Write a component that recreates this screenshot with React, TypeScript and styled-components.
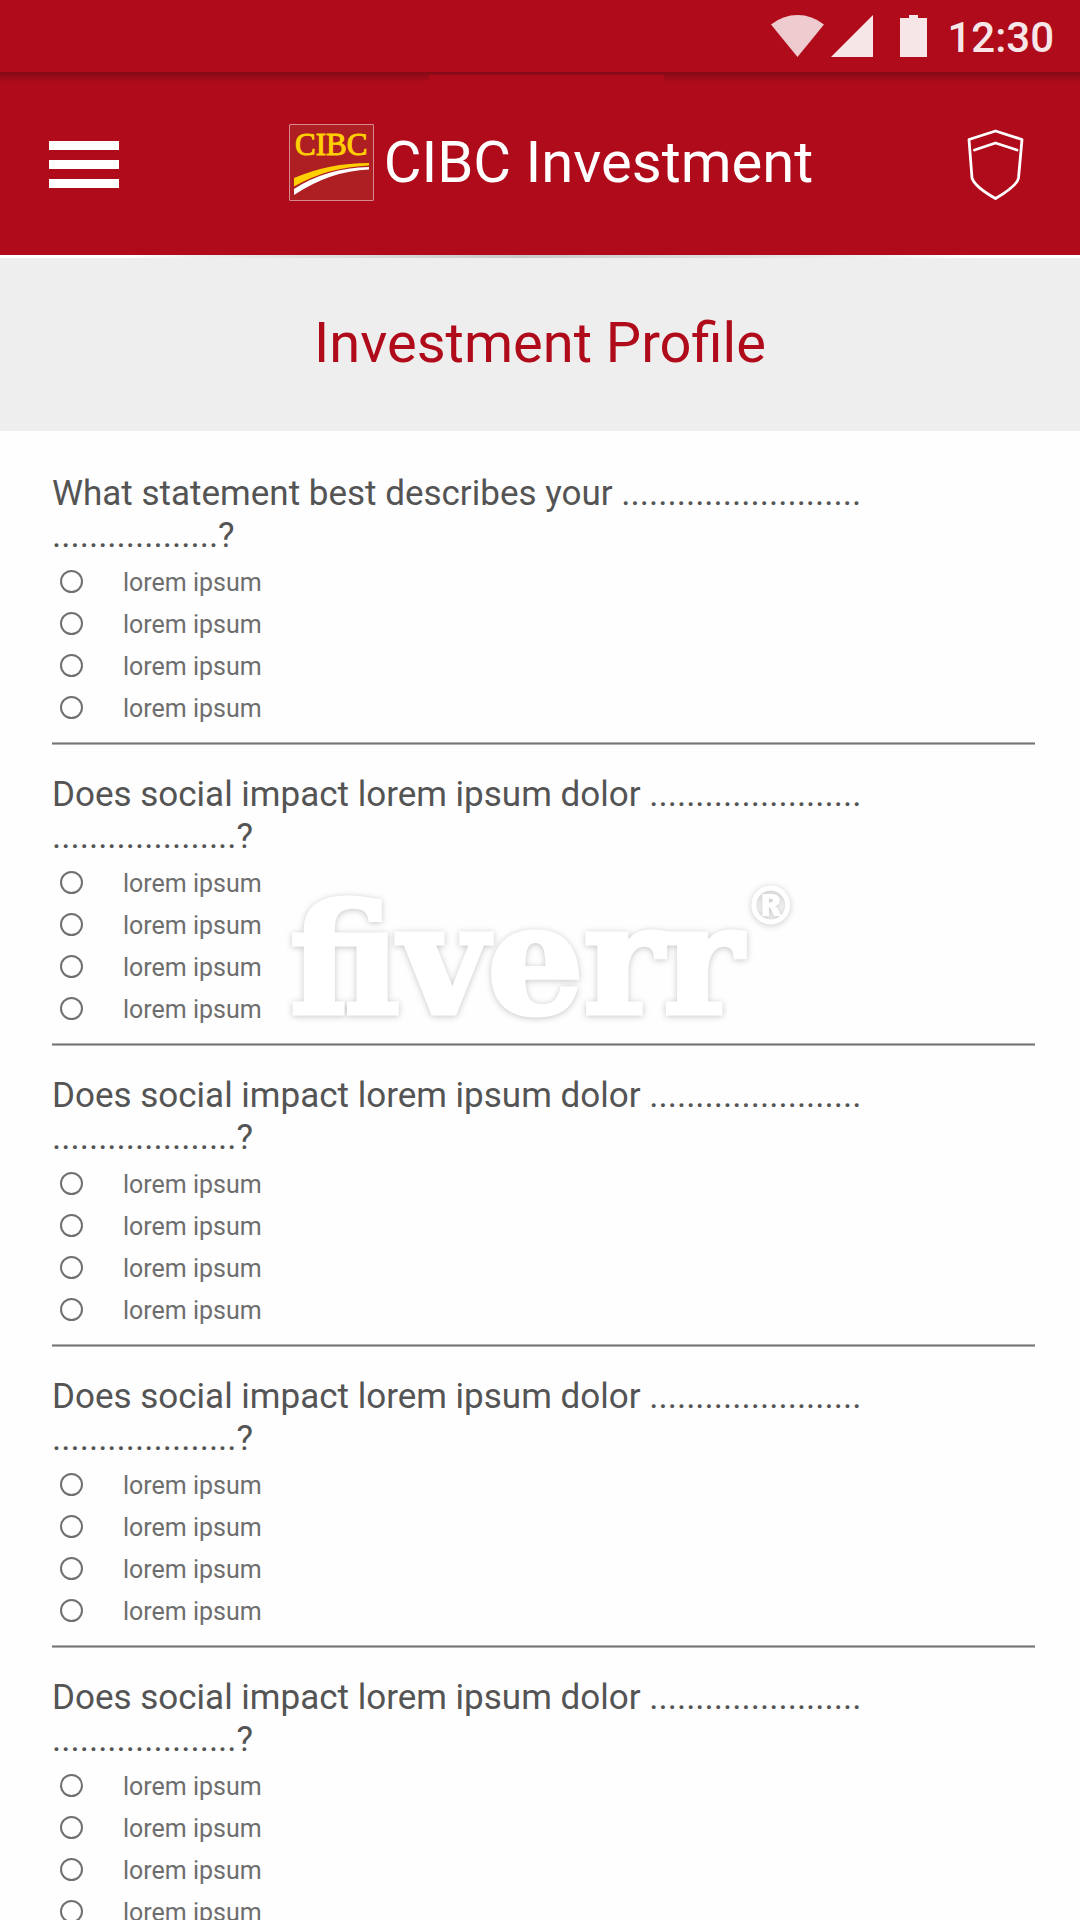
import React from "react";
import styled, { createGlobalStyle } from "styled-components";

const red = "#af0b1a";

const GlobalStyle = createGlobalStyle`
  *, *::before, *::after { box-sizing: border-box; }
  html { scrollbar-width: none; }
  body {
    margin: 0;
    background: #fefefe;
    font-family: Roboto, "Noto Sans", sans-serif;
  }
`;

const Page = styled.div`
  position: relative;
  min-height: 100vh;
  overflow: hidden;
`;

const StatusBar = styled.div`
  display: flex;
  align-items: center;
  justify-content: flex-end;
  height: 72px;
  padding-right: 26px;
  background: ${red};
  color: #f7e6e8;
`;

const StatusIcon = styled.svg<{ $gap: number }>`
  display: block;
  height: 42px;
  margin-right: ${(p) => p.$gap}px;
  fill: currentColor;
`;

const Clock = styled.time`
  padding-top: 4px;
  font-size: 42px;
  line-height: 48px;
  font-weight: 500;
`;

const Header = styled.header`
  display: flex;
  align-items: center;
  height: 183px;
  padding: 2px 56px 0 49px;
  background-color: ${red};
  background-image: linear-gradient(${red}, ${red}),
    linear-gradient(rgba(70, 8, 20, 0.42), rgba(70, 8, 20, 0));
  background-size: 235px 20px, 100% 10px;
  background-position: calc(50% + 6px) 3px, 0 0;
  background-repeat: no-repeat;
`;

const IconButton = styled.button`
  display: flex;
  flex-direction: column;
  gap: 10px;
  padding: 0;
  border: 0;
  background: none;
  cursor: pointer;
`;

const Bar = styled.span`
  width: 70px;
  height: 9px;
  background: #fff;
`;

const Brand = styled.div`
  display: flex;
  flex: 1;
  align-items: center;
  justify-content: center;
  gap: 10px;
  padding: 0 0 4px 16px;
`;

const LogoBox = styled.div`
  display: flex;
  flex-direction: column;
  align-items: center;
  width: 85px;
  height: 77px;
  border: 1px solid #d98a90;
  border-radius: 1px;
  background: #ae1f24;
`;

const LogoText = styled.span`
  padding-top: 2px;
  color: #ffd000;
  font: 31px/36px "Liberation Serif", serif;
  -webkit-text-stroke: 1px #ffd000;
`;

const BrandName = styled.span`
  padding-bottom: 2px;
  color: #fff;
  font-size: 58px;
  line-height: 68px;
  white-space: nowrap;
`;

const TitleBand = styled.div`
  padding: 52px 24px 55px;
  border-top: 3px solid;
  border-image: linear-gradient(90deg, #fff 12%, #eee 18%, #c8c8c8 48%, #eee 80%, #fff 90%) 1;
  background: #eee;
`;

const Title = styled.h1`
  margin: 0;
  color: ${red};
  font-size: 56px;
  line-height: 66px;
  font-weight: 400;
  text-align: center;
`;

const Survey = styled.form`
  padding: 13px 45px 0 52px;
`;

const Question = styled.fieldset`
  margin: 0 0 1px;
  padding: 29px 0 13px;
  border: 0;
  border-bottom: 1px solid #747474;
  box-shadow: 0 1px #b0b0b0, inset 0 -1px #b0b0b0;
  min-width: 0;
`;

const Prompt = styled.legend`
  float: left;
  width: 100%;
  margin-bottom: 5px;
  padding: 0;
  color: #545454;
  font-size: 35px;
  line-height: 42px;
`;

const Line = styled.span`
  display: block;
`;

const Option = styled.label`
  display: flex;
  clear: both;
  align-items: center;
  gap: 40px;
  padding-left: 8px;
  color: #6e6e6e;
  font-size: 25px;
  line-height: 42px;
`;

const Radio = styled.input`
  appearance: none;
  width: 23px;
  height: 23px;
  margin: 0 0 4px;
  border: 2px solid #707070;
  border-radius: 50%;
  &:checked {
    background: radial-gradient(${red} 40%, transparent 45%);
  }
`;

const Watermark = styled.div`
  position: absolute;
  top: 874px;
  left: calc(50% - 250px);
  display: flex;
  align-items: flex-start;
  gap: 2px;
  color: #fff;
  pointer-events: none;
  filter: drop-shadow(0 1px 3px rgba(0, 0, 0, 0.22));
`;

const WatermarkWord = styled.span`
  font: bold 151px/172px "DejaVu Serif", serif;
  -webkit-text-stroke: 5px #fff;
`;

const Registered = styled.sup`
  font: bold 52px/64px "DejaVu Sans", sans-serif;
  -webkit-text-stroke: 1px #fff;
`;

const questions = [
  ["What statement best describes your ..........................", "..................?"],
  ["Does social impact lorem ipsum dolor .......................", "....................?"],
  ["Does social impact lorem ipsum dolor .......................", "....................?"],
  ["Does social impact lorem ipsum dolor .......................", "....................?"],
  ["Does social impact lorem ipsum dolor .......................", "....................?"],
];

const options = ["lorem ipsum", "lorem ipsum", "lorem ipsum", "lorem ipsum"];

export default function App() {
  return (
    <Page>
      <GlobalStyle />
      <StatusBar>
        <StatusIcon $gap={7} width="53" viewBox="0 0 53 42" opacity="0.88">
          <path d="M0 9.500Q12 0 26.500 0T53 9.500L26.500 42Z" />
        </StatusIcon>
        <StatusIcon $gap={27} width="42" viewBox="0 0 42 42">
          <path d="M42 0V42H0Z" />
        </StatusIcon>
        <StatusIcon $gap={20} width="27" viewBox="0 0 27 42">
          <path d="M9 0H18V3H27V42H0V3H9Z" />
        </StatusIcon>
        <Clock>12:30</Clock>
      </StatusBar>
      <Header>
        <IconButton type="button" aria-label="Menu">
          <Bar />
          <Bar />
          <Bar />
        </IconButton>
        <Brand>
          <LogoBox>
            <LogoText>CIBC</LogoText>
            <svg width="77" height="32" viewBox="0 0 77 32">
              <path d="M1 15Q36 0 76 0V2.500Q35 4 1 23.500Z" fill="#ffd000" />
              <path d="M1 26Q33 5 76 4V6.500Q37 8 1 32Z" fill="#fff" />
            </svg>
          </LogoBox>
          <BrandName>CIBC Investment</BrandName>
        </Brand>
        <IconButton type="button" aria-label="Security">
          <svg width="57" height="71" viewBox="0 0 57 71" fill="none" stroke="#fff" strokeWidth="2.800" strokeLinejoin="round" strokeLinecap="round">
            <path d="M28.500 2L55 10.500L51.500 49Q50 57 28.500 69.500Q8 58 5 49L2 10.500Z" />
            <path d="M7.500 21L28.500 14L50 21" />
          </svg>
        </IconButton>
      </Header>
      <TitleBand>
        <Title>Investment Profile</Title>
      </TitleBand>
      <Survey>
        {questions.map((lines, q) => (
          <Question key={q}>
            <Prompt>
              {lines.map((line) => (
                <Line key={line}>{line}</Line>
              ))}
            </Prompt>
            {options.map((text, o) => (
              <Option key={o}>
                <Radio type="radio" name={`question-${q}`} value={o} />
                {text}
              </Option>
            ))}
          </Question>
        ))}
      </Survey>
      <Watermark>
        <WatermarkWord>fiverr</WatermarkWord>
        <Registered>®</Registered>
      </Watermark>
    </Page>
  );
}
